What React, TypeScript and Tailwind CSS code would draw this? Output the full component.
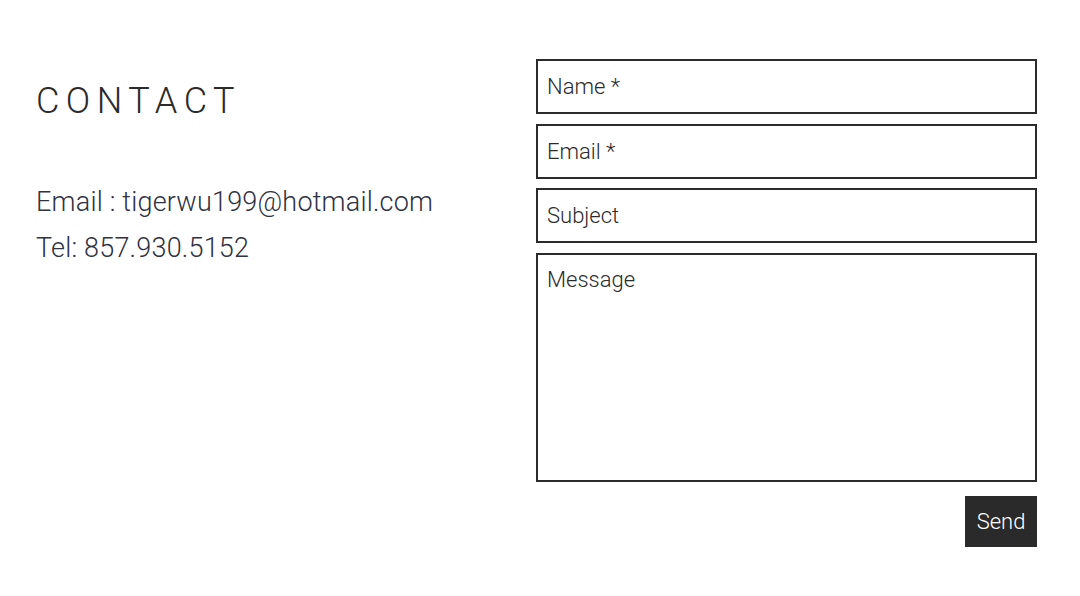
import React from "react";

export default function App() {
  const inputCls =
    "h-[55px] w-full border-2 border-[#2b2b2b] bg-white px-[9px] text-[22px] font-light text-[#2b2b2b] placeholder:text-[#2b2b2b] outline-none";
  return (
    <div
      className="flex h-[596px] w-[1080px] bg-white text-[#2f2e2e]"
      style={{ fontFamily: "Roboto, 'Liberation Sans', sans-serif" }}
    >
      <div className="w-[536px] shrink-0 pl-[36px] pt-[83px]">
        <h1 className="text-[36px] font-light leading-none tracking-[0.18em] text-[#2b2b2b]">
          CONTACT
        </h1>
        <div className="mt-[60px] text-[27px] font-light leading-[46px] tracking-[0.2px] text-[#2f3242]">
          <p>Email : tigerwu199@hotmail.com</p>
          <p>Tel: 857.930.5152</p>
        </div>
      </div>
      <form className="flex w-[501px] flex-col pt-[59px]">
        <input className={inputCls} placeholder="Name *" />
        <input className={inputCls + " mt-[10px]"} placeholder="Email *" />
        <input className={inputCls + " mt-[9px]"} placeholder="Subject" />
        <textarea
          className="mt-[10px] h-[229px] w-full resize-none border-2 border-[#2b2b2b] bg-white px-[9px] pt-[12px] text-[22px] font-light leading-[26px] text-[#2b2b2b] placeholder:text-[#2b2b2b] outline-none"
          placeholder="Message"
        />
        <div className="mt-[14px] flex justify-end">
          <button
            type="button"
            className="h-[51px] w-[72px] bg-[#2a2a2a] text-[22px] font-light text-white"
          >
            Send
          </button>
        </div>
      </form>
    </div>
  );
}
